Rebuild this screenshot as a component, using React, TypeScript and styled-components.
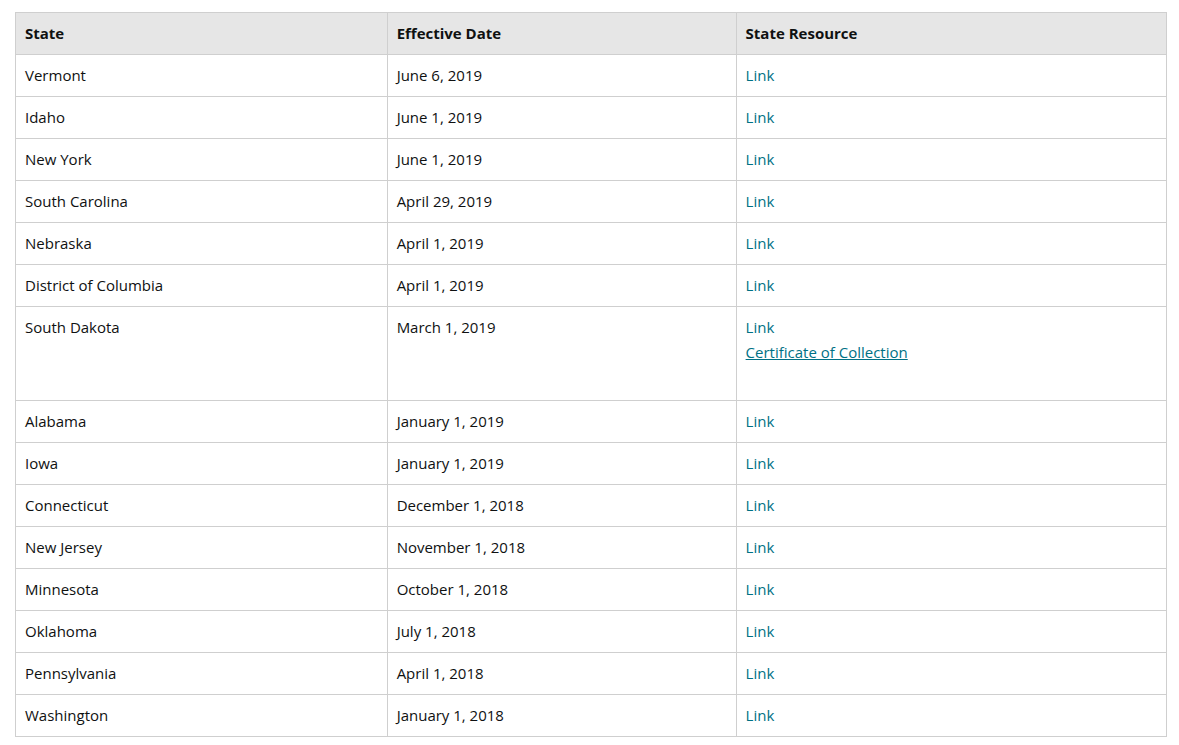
import React from "react";
import styled, { createGlobalStyle } from "styled-components";

const Global = createGlobalStyle`
  body { margin: 0; background: #fff; font-family: "Open Sans", "Noto Sans", sans-serif; }
`;

const Wrap = styled.div`
  padding: 12px 12px 0 15px;
`;

const Table = styled.table`
  width: 1152px;
  border-collapse: collapse;
  font-size: 15px;
  color: #0f1111;
`;

const Th = styled.th<{ w: number }>`
  width: ${(p) => p.w}px;
  text-align: left;
  font-weight: 700;
  background: #e6e6e6;
  border: 1px solid #cfcfcf;
  padding: 8px 9px;
  line-height: 25px;
`;

const Td = styled.td`
  border: 1px solid #cfcfcf;
  padding: 8px 9px;
  line-height: 25px;
  vertical-align: top;
`;

const A = styled.a<{ u?: boolean }>`
  display: block;
  color: #007185;
  text-decoration: ${(p) => (p.u ? "underline" : "none")};
`;

const Spacer = styled.div`
  height: 27px;
`;

const rows: [string, string][] = [
  ["Vermont", "June 6, 2019"],
  ["Idaho", "June 1, 2019"],
  ["New York", "June 1, 2019"],
  ["South Carolina", "April 29, 2019"],
  ["Nebraska", "April 1, 2019"],
  ["District of Columbia", "April 1, 2019"],
  ["South Dakota", "March 1, 2019"],
  ["Alabama", "January 1, 2019"],
  ["Iowa", "January 1, 2019"],
  ["Connecticut", "December 1, 2018"],
  ["New Jersey", "November 1, 2018"],
  ["Minnesota", "October 1, 2018"],
  ["Oklahoma", "July 1, 2018"],
  ["Pennsylvania", "April 1, 2018"],
  ["Washington", "January 1, 2018"],
];

export default function App() {
  return (
    <Wrap>
      <Global />
      <Table>
        <thead>
          <tr>
            <Th w={370}>State</Th>
            <Th w={347}>Effective Date</Th>
            <Th w={434}>State Resource</Th>
          </tr>
        </thead>
        <tbody>
          {rows.map(([s, d]) => (
            <tr key={s}>
              <Td>{s}</Td>
              <Td>{d}</Td>
              <Td>
                <A href="#">Link</A>
                {s === "South Dakota" && (
                  <>
                    <A href="#" u>Certificate of Collection</A>
                    <Spacer />
                  </>
                )}
              </Td>
            </tr>
          ))}
        </tbody>
      </Table>
    </Wrap>
  );
}
